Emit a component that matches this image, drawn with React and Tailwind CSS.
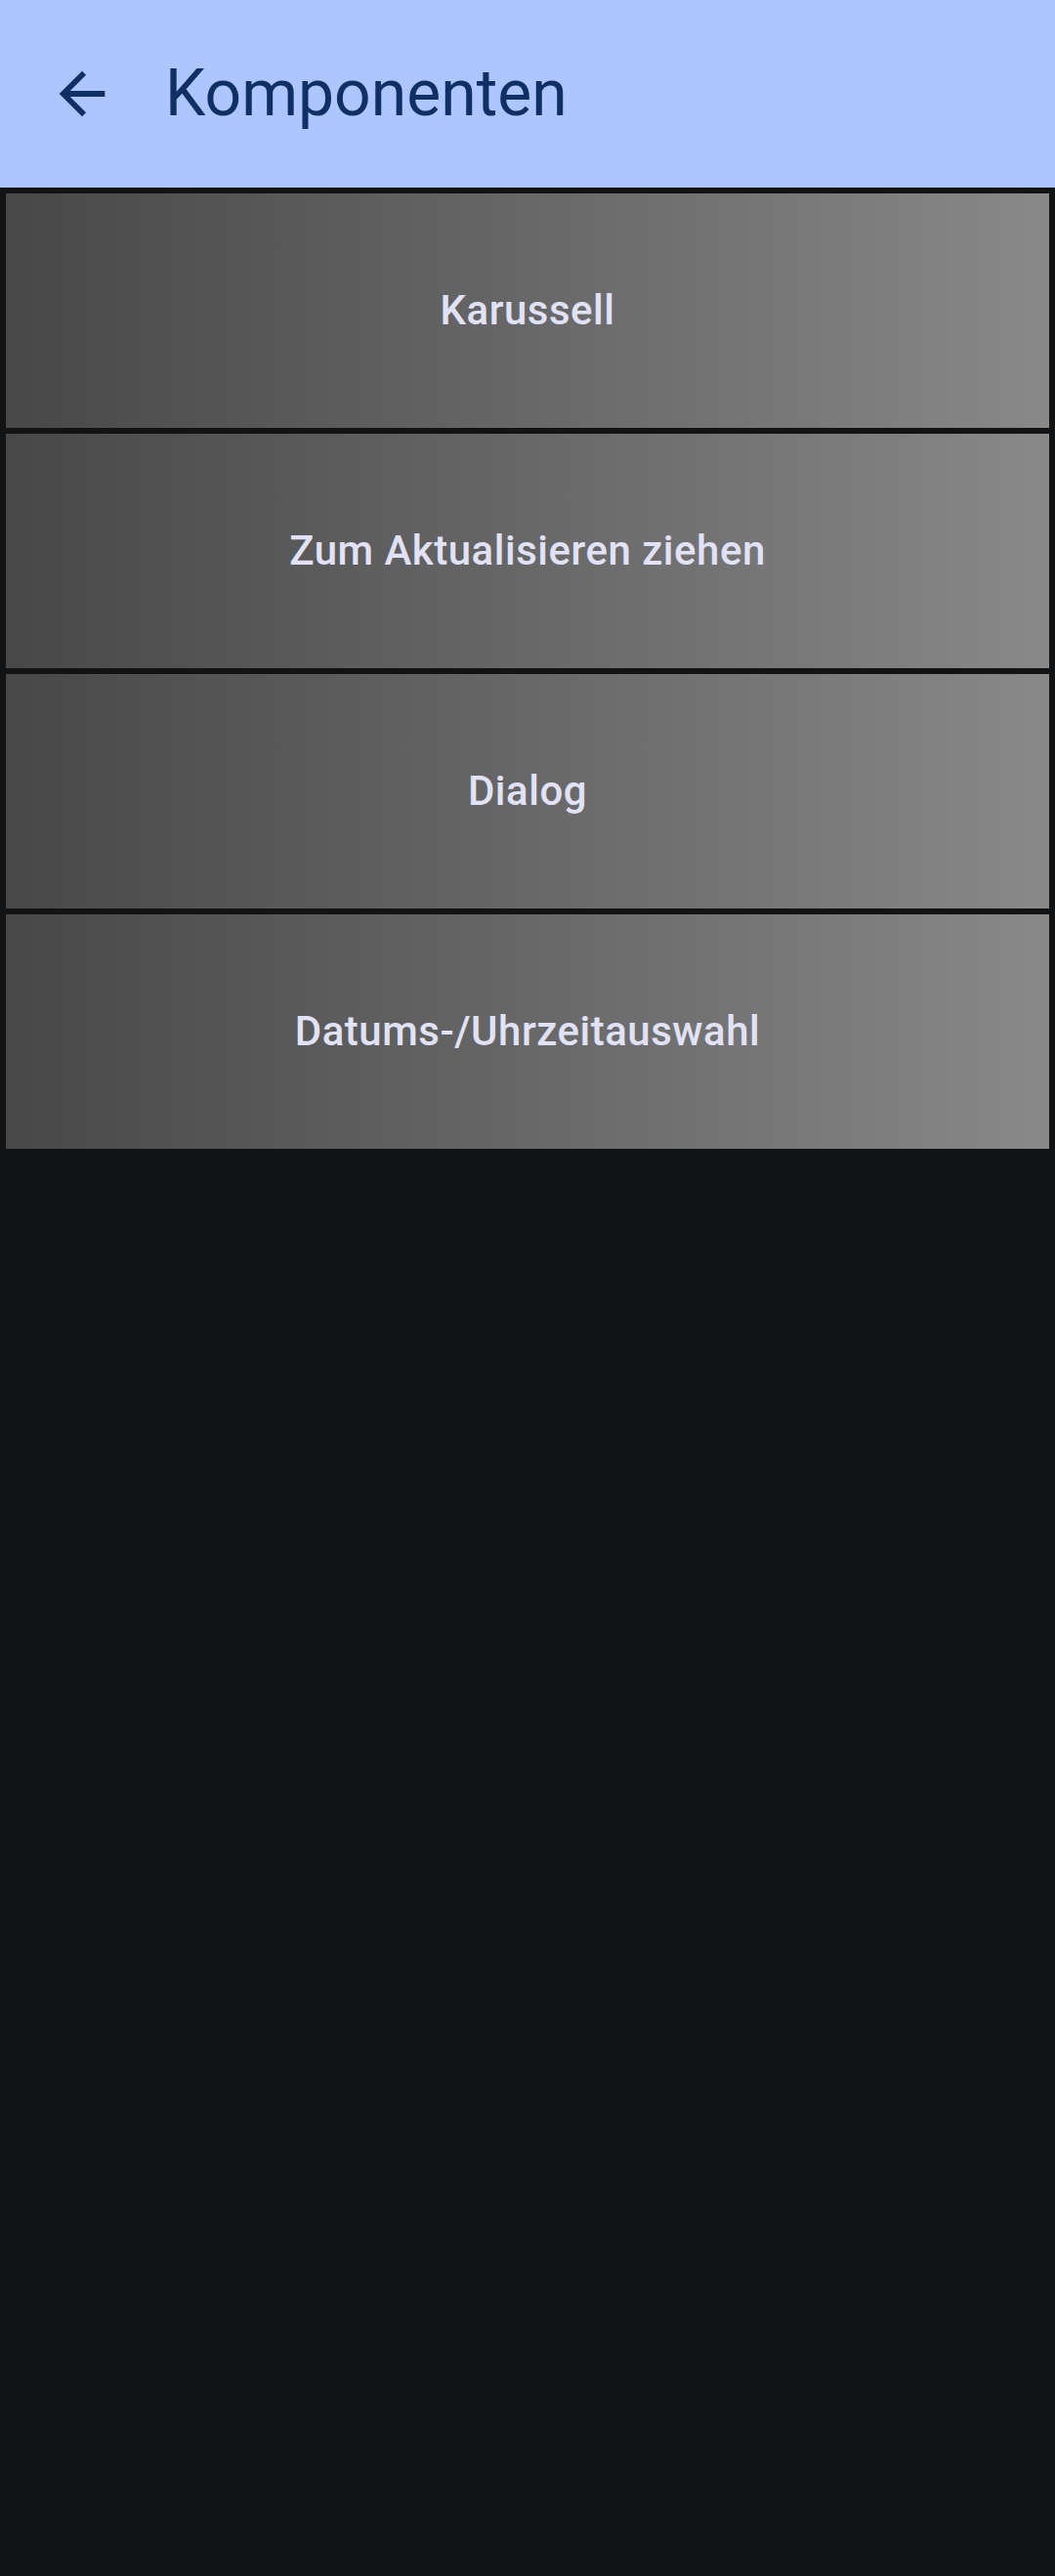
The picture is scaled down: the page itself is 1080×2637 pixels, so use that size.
import React from 'react';

const items = ['Karussell', 'Zum Aktualisieren ziehen', 'Dialog', 'Datums-/Uhrzeitauswahl'];

const App = () => {
    return (
        <div className="min-h-[2637px] bg-[#121314] font-['Roboto',sans-serif]">

            {/* Top app bar */}
            <header className="h-[192px] bg-[#adc6ff] flex items-center">
                <button className="ml-[49px] w-[70px] h-[70px] flex items-center justify-center text-[#102f62]">
                    <svg viewBox="0 0 24 24" className="w-[70px] h-[70px]" fill="currentColor">
                        <path d="M20 11H7.83l5.59-5.59L12 4l-8 8 8 8 1.41-1.41L7.83 13H20v-2z" />
                    </svg>
                </button>
                <h1 className="ml-[50px] text-[66px] leading-none text-[#102f62] font-normal">
                    Komponenten
                </h1>
            </header>

            {/* List */}
            <div className="p-[6px] flex flex-col gap-[6px]">
                {items.map((label) => (
                    <button
                        key={label}
                        className="h-[240px] w-full flex items-center justify-center bg-gradient-to-r from-[#484848] to-[#898989]"
                    >
                        <span className="text-[42px] font-medium tracking-[0.5px] text-[#e1e2f7] leading-none">{label}</span>
                    </button>
                ))}
            </div>
        </div>
    );
};

export default App;
